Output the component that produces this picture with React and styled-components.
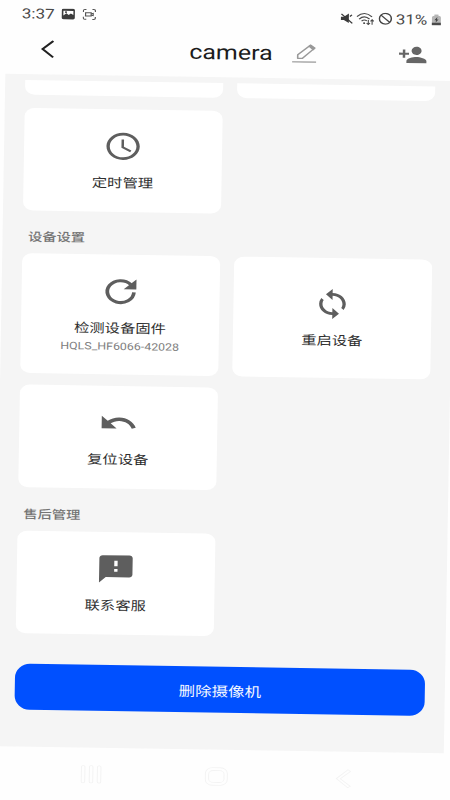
import React from 'react';
import styled, { createGlobalStyle } from 'styled-components';
import { MdAccessTime, MdSync, MdUndo, MdFeedback, MdPersonAdd } from 'react-icons/md';

const GlobalStyle = createGlobalStyle`
  * {
    box-sizing: border-box;
  }
  body {
    margin: 0;
    background: #fefefe;
    font-family: Roboto, "Noto Sans CJK SC", sans-serif;
  }
`;

const Viewport = styled.div`
  width: 450px;
  height: 800px;
  overflow: hidden;
  background: #fefefe;
`;

/* the phone lies slightly turned and flattened in the viewport */
const Phone = styled.div`
  width: 450px;
  height: 980px;
  display: flex;
  flex-direction: column;
  transform-origin: 0 0;
  transform: matrix(1, 0.0158, -0.0141, 0.8208, 6.6, 0);
`;

const StatusBar = styled.div`
  height: 31px;
  padding: 0 15.5px 0 15.5px;
  display: flex;
  align-items: center;
  justify-content: space-between;
  color: #4a4a4a;
  font-size: 17px;
`;

const StatusGroup = styled.div`
  display: flex;
  align-items: center;
  gap: ${props => props.gap || 5}px;
`;

const Header = styled.header`
  height: 59.3px;
  padding: 0 28px 4px 34.5px;
  display: grid;
  grid-template-columns: 149px 82px 1fr;
  align-items: center;
`;

const Title = styled.h1`
  margin: 3px 0 0;
  font-size: 25px;
  line-height: 30px;
  font-weight: 400;
  color: #1c1c1c;
  text-align: center;
  white-space: nowrap;
`;

const Actions = styled.div`
  display: flex;
  justify-content: space-between;
  align-items: center;
  padding-left: 20px;
  color: #666;
`;

const Content = styled.main`
  height: 819px;
  background: #f5f5f5;
  padding: 6.5px 20px 0;
`;

const Grid = styled.div`
  display: grid;
  grid-template-columns: 198px 198px;
  gap: 14.5px 14px;
`;

const CutRow = styled(Grid)`
  margin-bottom: 16px;
`;

const CutCard = styled.div`
  height: 18px;
  background: #fff;
  border-radius: 0 0 10px 10px;
`;

const Card = styled.div`
  padding: 25px 0 24px;
  background: #fff;
  border-radius: 10px;
  display: flex;
  flex-direction: column;
  align-items: center;
  justify-content: center;
  color: #5e5e5e;
`;

const CardTitle = styled.div`
  margin-top: 14px;
  font-size: 15.3px;
  line-height: 22px;
  color: #2f2f2f;
`;

const CardSub = styled.div`
  font-size: 12.4px;
  line-height: 22px;
  margin-bottom: -1.5px;
  color: #808080;
`;

const SectionTitle = styled.h2`
  margin: 0;
  height: 52.5px;
  padding: 9.5px 0 0 5.5px;
  display: flex;
  align-items: center;
  font-size: 14.3px;
  font-weight: 500;
  color: #757575;
`;

const DeleteButton = styled.button`
  display: block;
  width: 410px;
  height: 56px;
  margin: 37.5px 0 0;
  padding: 2px 0 0;
  border: none;
  border-radius: 15px / 17px;
  background: #0050ff;
  color: #f4f8ff;
  font-family: inherit;
  font-size: 16.5px;
`;

const NavBar = styled.nav`
  height: 65px;
  padding: 0 92px 0 86.5px;
  display: grid;
  grid-template-columns: 124px 1fr auto;
  align-items: center;
`;

const RefreshIcon = () => (
    <svg width="40" height="40" viewBox="0 0 24 24" fill="none">
        <path d="M20 12.4A8 8 0 1 1 18 6.7" stroke="currentColor" strokeWidth="2.2" />
        <path d="M21.4 3V10.3H13.8Z" fill="currentColor" />
    </svg>
)

const BackIcon = () => (
    <svg width="14" height="22" viewBox="0 0 14 22" fill="none" stroke="#222" strokeWidth="2.2">
        <path d="M12.5 1L1.8 11L12.5 21" />
    </svg>
)

const EditIcon = () => (
    <svg width="25" height="24" viewBox="0 0 25 24" fill="none" stroke="#999" strokeWidth="1.6">
        <path d="M6 18.5V14L18.5 2.2L22.5 6L10.5 18.5Z" strokeLinejoin="round" />
        <path d="M16.2 3.5L19 1.2L24 5.4L21.4 8.5Z" fill="#999" stroke="none" />
        <path d="M0.5 22.8H24.5" />
    </svg>
)

const PhotoIcon = () => (
    <svg width="14" height="14" viewBox="0 0 14 14">
        <rect x="0.3" y="0.5" width="13.2" height="13" rx="1.8" fill="#3c3c3c" />
        <path d="M2 3H12V8L9.5 6.2L7.3 8.2L5 6L2 8.8Z" fill="#fff" />
        <circle cx="4.6" cy="4.6" r="1.1" fill="#3c3c3c" />
    </svg>
)

const CaptureIcon = () => (
    <svg width="14" height="14" viewBox="0 0 14 14" fill="none" stroke="#555" strokeWidth="1.2">
        <path d="M1 4V2.5Q1 1 2.5 1H4M10 1H11.5Q13 1 13 2.5V4M13 10V11.5Q13 13 11.5 13H10M4 13H2.5Q1 13 1 11.5V10" />
        <rect x="3.2" y="5" width="5.6" height="4" />
        <path d="M8.8 6L10.8 5.6V8.4L8.8 8" />
    </svg>
)

const MuteIcon = () => (
    <svg width="13" height="14" viewBox="0 0 13 14" fill="#3a3a3a">
        <path d="M0.5 5H3.5L8.5 1V12.5L3.5 9H0.5Z" />
        <path d="M9.5 4.5L11.5 2.5M1 1.5L12 12.8" stroke="#3a3a3a" strokeWidth="1.4" />
    </svg>
)

const WifiIcon = () => (
    <svg width="18" height="16" viewBox="0 0 18 16" fill="none" stroke="#4a4a4a" strokeWidth="1.4">
        <path d="M0.5 5.5Q8 -2.5 15.6 5.5M2.8 8.4Q8 3 13.2 8.4M5.2 11Q8 8.2 10.5 10.6" />
        <circle cx="7.8" cy="13.3" r="1.1" fill="#4a4a4a" stroke="none" />
        <path d="M12 9.5V15M10.3 13L12 15L13.7 13M15.8 15V9M14.2 11L15.8 9L17.4 11" strokeWidth="1.1" />
    </svg>
)

const BlockIcon = () => (
    <svg width="14" height="15" viewBox="0 0 14 15" fill="none" stroke="#444" strokeWidth="1.5">
        <ellipse cx="7" cy="7.5" rx="6" ry="6.6" />
        <path d="M2.6 3.2L11.4 11.8" />
    </svg>
)

const BatteryIcon = () => (
    <svg width="10" height="14" viewBox="0 0 10 14">
        <path d="M0.5 13.5V4Q0.5 2 3 1.8V0.5H7V1.8Q9.5 2 9.5 4V13.5Z" fill="#b5b5b5" />
        <path d="M0.5 10.5H9.5V13.5H0.5Z" fill="#4a4a4a" />
        <path d="M6 3.5L3 7.5H4.7L4.3 10L7.2 6.5H5.5Z" fill="#444" />
    </svg>
)

const RecentsIcon = () => (
    <svg width="22" height="23" viewBox="0 0 22 23" fill="none" stroke="#f3f3f3">
        <rect x="1" y="1" width="3.5" height="21" rx="1.5" />
        <rect x="9" y="1" width="3.5" height="21" rx="1.5" />
        <rect x="17" y="1" width="3.5" height="21" rx="1.5" />
    </svg>
)

const HomeIcon = () => (
    <svg width="24" height="24" viewBox="0 0 24 24" fill="none" stroke="#f3f3f3">
        <rect x="1" y="1" width="22" height="21.5" rx="7" />
        <rect x="4.3" y="4.5" width="15.4" height="14.5" rx="4.5" />
    </svg>
)

const NavBackIcon = () => (
    <svg width="16" height="24" viewBox="0 0 16 24" fill="none" stroke="#f3f3f3">
        <path d="M12.5 1L1 12L12.5 23L15 21L5 12L15 3Z" />
    </svg>
)

const Item = ({ icon, title, sub }) => (
    <Card>
        {icon}
        <CardTitle>{title}</CardTitle>
        {sub && <CardSub>{sub}</CardSub>}
    </Card>
)

const App = () => {
    return (
        <Viewport>
            <GlobalStyle />
            <Phone>
                <StatusBar>
                    <StatusGroup gap={7}>
                        <span>3:37</span>
                        <PhotoIcon />
                        <CaptureIcon />
                    </StatusGroup>
                    <StatusGroup gap={3.5}>
                        <MuteIcon />
                        <WifiIcon />
                        <BlockIcon />
                        <span>31%</span>
                        <BatteryIcon />
                    </StatusGroup>
                </StatusBar>
                <Header>
                    <BackIcon />
                    <Title>camera</Title>
                    <Actions>
                        <EditIcon />
                        <MdPersonAdd size={30} />
                    </Actions>
                </Header>
                <Content>
                    <CutRow>
                        <CutCard />
                        <CutCard />
                    </CutRow>
                    <Grid>
                        <Item icon={<MdAccessTime size={40} />} title="定时管理" />
                    </Grid>
                    <SectionTitle>设备设置</SectionTitle>
                    <Grid>
                        <Item icon={<RefreshIcon />} title="检测设备固件" sub="HQLS_HF6066-42028" />
                        <Item icon={<MdSync size={40} />} title="重启设备" />
                        <Item icon={<MdUndo size={40} />} title="复位设备" />
                    </Grid>
                    <SectionTitle>售后管理</SectionTitle>
                    <Grid>
                        <Item icon={<MdFeedback size={40} />} title="联系客服" />
                    </Grid>
                    <DeleteButton>删除摄像机</DeleteButton>
                </Content>
                <NavBar>
                    <RecentsIcon />
                    <HomeIcon />
                    <NavBackIcon />
                </NavBar>
            </Phone>
        </Viewport>
    )
}

export default App
